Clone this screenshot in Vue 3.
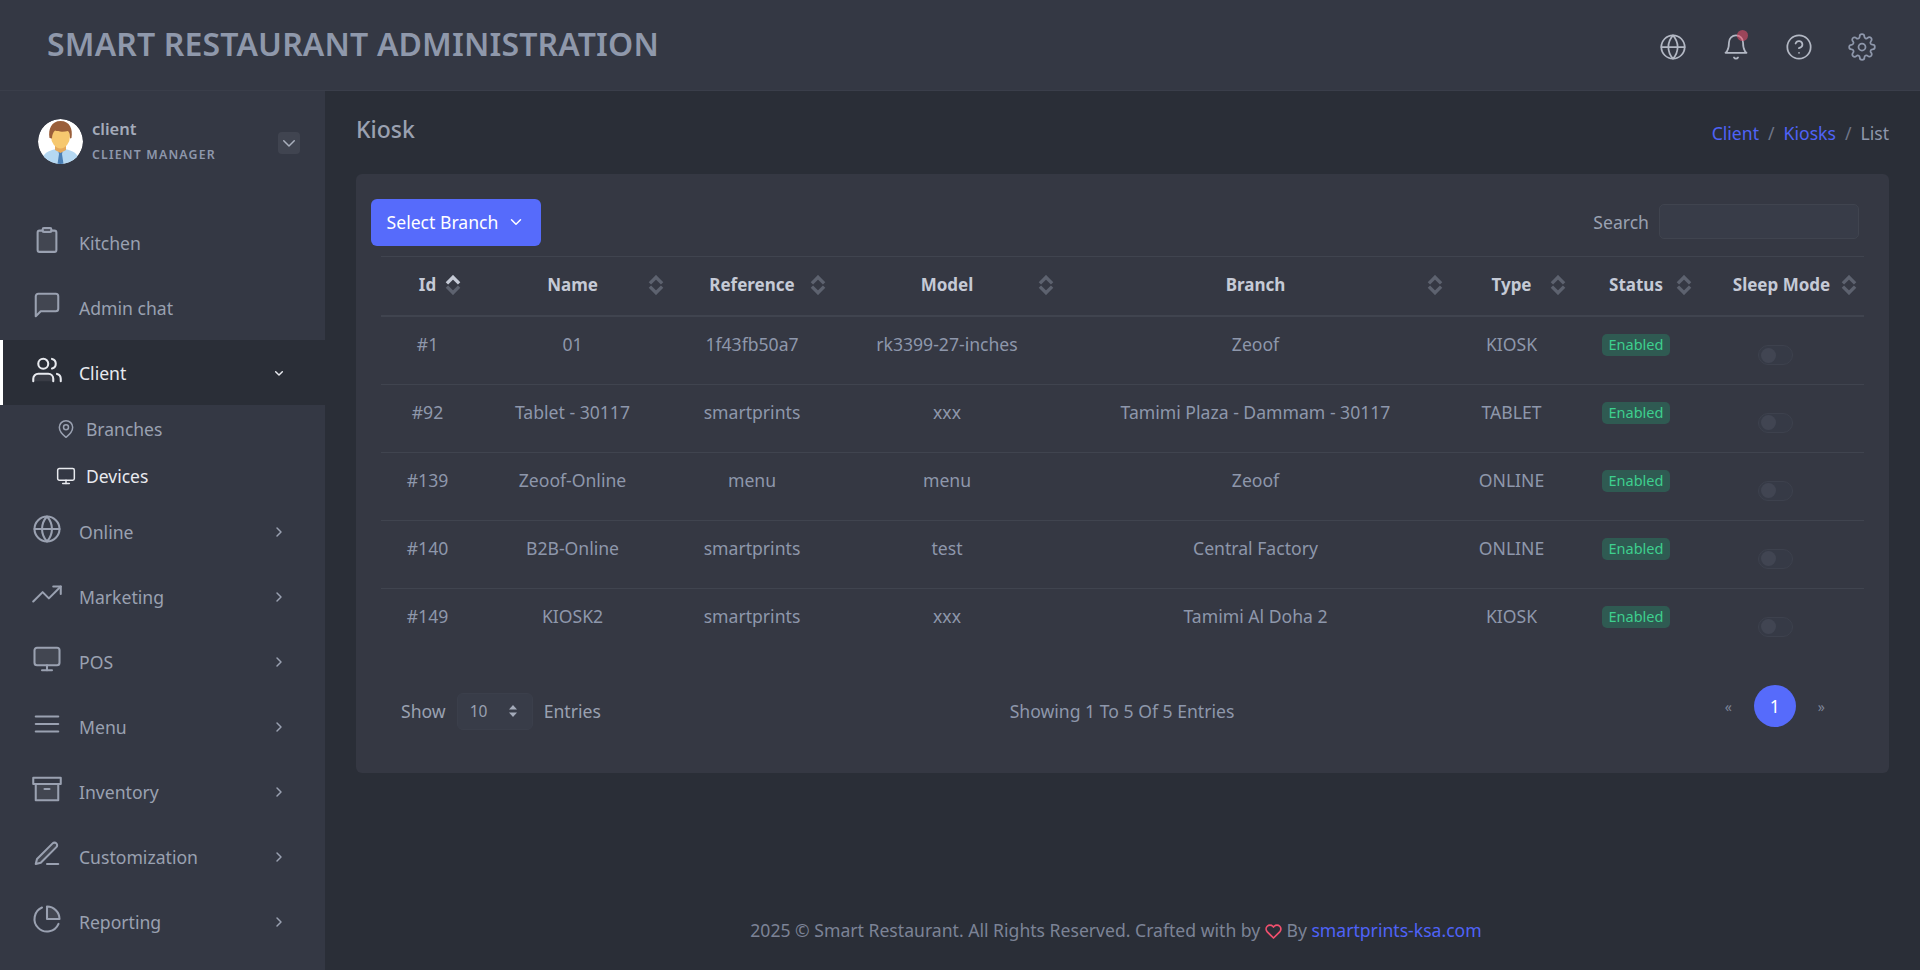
<template>
  <div class="page">
    <header class="topbar">
      <div class="brand">SMART RESTAURANT ADMINISTRATION</div>
      <div class="top-icons">
        <button class="top-icon">
          <svg viewBox="0 0 24 24" class="ico"><path v-for="d in icons.globe.s" :key="d" :d="d" /></svg>
        </button>
        <button class="top-icon">
          <svg viewBox="0 0 24 24" class="ico"><path v-for="d in icons.bell.s" :key="d" :d="d" /></svg>
          <span class="dot"></span>
        </button>
        <button class="top-icon">
          <svg viewBox="0 0 24 24" class="ico"><path v-for="d in icons.help.s" :key="d" :d="d" /></svg>
        </button>
        <button class="top-icon gear">
          <svg viewBox="0 0 24 24" class="ico"><path v-for="d in icons.gear.s" :key="d" :d="d" /></svg>
        </button>
      </div>
    </header>

    <div class="body-row">
      <aside class="sidebar">
        <div class="profile">
          <svg class="avatar" viewBox="0 0 45 45">
            <circle cx="22.5" cy="22.5" r="22.5" fill="#fff" />
            <path d="M5 38c2-5 8-7 13-8h9c5 1 11 3 13 8a22.500 22.500 0 0 1-35 0z" fill="#b5d8f2" />
            <path d="M20.500 33h4l-.5 2 1.500 10h-6L21 35z" fill="#4a7fb5" />
            <path d="M17 26h11v5l-5.500 3-5.500-3z" fill="#e5a95c" />
            <ellipse cx="22.500" cy="17" rx="9.500" ry="12.500" fill="#f6c86f" />
            <path d="M11.500 19c-1.500-9 2-17 11-17 9.500 0 12.500 8 11 17l-1.500.5c0-3.500-.5-6-2-7.500-4 1-9.500 1-13-.5-2 2-3 4.500-3 8z" fill="#9a5f3a" />
          </svg>
          <div class="who">
            <div class="who-name">client</div>
            <div class="who-role">CLIENT MANAGER</div>
          </div>
          <button class="who-toggle">
            <svg viewBox="0 0 24 24"><path d="M5 9l7 7 7-7" /></svg>
          </button>
        </div>

        <nav class="nav">
          <template v-for="item in nav" :key="item.label">
            <a class="nav-item" :class="{ active: item.active }">
              <svg viewBox="0 0 24 24" class="nav-ico">
                <path v-for="d in icons[item.icon].f" :key="d" :d="d" class="shade" />
                <path v-for="d in icons[item.icon].s" :key="d" :d="d" />
              </svg>
              <span class="nav-label">{{ item.label }}</span>
              <svg v-if="item.arrow" viewBox="0 0 24 24" class="nav-arrow">
                <path :d="item.active ? 'M7 10l5 5 5-5' : 'M9 6l6 6-6 6'" />
              </svg>
            </a>
            <a v-for="sub in item.children" :key="sub.label" class="sub-item" :class="{ current: sub.current }">
              <svg viewBox="0 0 24 24" class="sub-ico"><path v-for="d in icons[sub.icon].s" :key="d" :d="d" /></svg>
              <span>{{ sub.label }}</span>
            </a>
          </template>
        </nav>
      </aside>

      <main class="main">
        <div class="page-head">
          <h1 class="page-title">Kiosk</h1>
          <div class="crumbs">
            <a>Client</a><span class="sep">/</span><a>Kiosks</a><span class="sep">/</span><span>List</span>
          </div>
        </div>

        <section class="card">
          <div class="card-top">
            <button class="branch-btn">
              Select Branch
              <svg viewBox="0 0 24 24"><path d="M6 9l6 6 6-6" /></svg>
            </button>
            <label class="search">Search <input type="text" /></label>
          </div>

          <table class="grid">
            <colgroup>
              <col v-for="c in columns" :key="c.label" :style="{ width: c.width + 'px' }" />
            </colgroup>
            <thead>
              <tr>
                <th v-for="(c, i) in columns" :key="c.label">
                  {{ c.label }}
                  <svg class="sort" viewBox="0 0 14 18">
                    <path d="M1.500 7.500L7 2l5.500 5.500" :class="{ on: i === 0 }" />
                    <path d="M1.500 10.500L7 16l5.500-5.500" />
                  </svg>
                </th>
              </tr>
            </thead>
            <tbody>
              <tr v-for="row in rows" :key="row.id">
                <td>#{{ row.id }}</td>
                <td>{{ row.name }}</td>
                <td>{{ row.reference }}</td>
                <td>{{ row.model }}</td>
                <td>{{ row.branch }}</td>
                <td>{{ row.type }}</td>
                <td><span class="badge">Enabled</span></td>
                <td><span class="switch"><span class="knob"></span></span></td>
              </tr>
            </tbody>
          </table>

          <div class="card-foot">
            <div class="show">
              Show
              <span class="select">10
                <svg viewBox="0 0 10 14"><path d="M5 1l4 4.500H1z" /><path d="M5 13l4-4.500H1z" /></svg>
              </span>
              Entries
            </div>
            <div class="showing">Showing 1 To 5 Of 5 Entries</div>
            <div class="pager">
              <span class="pg-arrow">«</span>
              <span class="pg-num">1</span>
              <span class="pg-arrow">»</span>
            </div>
          </div>
        </section>

        <footer class="foot">
          2025 © Smart Restaurant. All Rights Reserved. Crafted with by
          <svg class="heart" viewBox="0 0 24 24"><path d="M20.8 4.600a5.500 5.500 0 0 0-7.800 0L12 5.700l-1-1.100a5.500 5.500 0 0 0-7.800 7.800L12 21.200l8.800-8.800a5.500 5.500 0 0 0 0-7.800z" /></svg>
          By <a>smartprints-ksa.com</a>
        </footer>
      </main>
    </div>
  </div>
</template>

<script setup>
const circle = (cx, cy, r) => `M${cx - r} ${cy}a${r} ${r} 0 1 0 ${r * 2} 0a${r} ${r} 0 1 0 ${-r * 2} 0z`

const icons = {
  clipboard: {
    f: ['M6 4.500h12a1.500 1.500 0 0 1 1.500 1.500v14a1.500 1.500 0 0 1-1.500 1.500H6A1.500 1.500 0 0 1 4.500 20V6A1.500 1.500 0 0 1 6 4.500z'],
    s: ['M8.500 4.500H6A1.500 1.500 0 0 0 4.500 6v14A1.500 1.500 0 0 0 6 21.500h12a1.500 1.500 0 0 0 1.500-1.500V6A1.500 1.500 0 0 0 18 4.500h-2.500', 'M9.500 2.500h5a1 1 0 0 1 1 1v1a1 1 0 0 1-1 1h-5a1 1 0 0 1-1-1v-1a1 1 0 0 1 1-1z']
  },
  chat: {
    f: ['M21 15a2 2 0 0 1-2 2H7l-4 4V5a2 2 0 0 1 2-2h14a2 2 0 0 1 2 2z'],
    s: ['M21 15a2 2 0 0 1-2 2H7l-4 4V5a2 2 0 0 1 2-2h14a2 2 0 0 1 2 2z']
  },
  users: {
    f: ['M17 21v-2a4 4 0 0 0-4-4H5a4 4 0 0 0-4 4v2z'],
    s: ['M17 21v-2a4 4 0 0 0-4-4H5a4 4 0 0 0-4 4v2', circle(9, 7, 4), 'M23 21v-2a4 4 0 0 0-3-3.870', 'M16 3.130a4 4 0 0 1 0 7.750']
  },
  globe: {
    f: [],
    s: [circle(12, 12, 10), 'M2 12h20', 'M12 2a15.300 15.300 0 0 1 4 10 15.300 15.300 0 0 1-4 10 15.300 15.300 0 0 1-4-10 15.300 15.300 0 0 1 4-10z']
  },
  trend: { f: [], s: ['M23 6l-9.500 9.500-5-5L1 18', 'M17 6h6v6'] },
  monitor: {
    f: ['M4 3h16a2 2 0 0 1 2 2v10a2 2 0 0 1-2 2H4a2 2 0 0 1-2-2V5a2 2 0 0 1 2-2z'],
    s: ['M4 3h16a2 2 0 0 1 2 2v10a2 2 0 0 1-2 2H4a2 2 0 0 1-2-2V5a2 2 0 0 1 2-2z', 'M8 21h8', 'M12 17v4']
  },
  menu: { f: [], s: ['M3 6h18', 'M3 12h18', 'M3 18h18'] },
  archive: {
    f: ['M3 8h18v13H3z'],
    s: ['M21 8v13H3V8', 'M1 3h22v5H1z', 'M10 12h4']
  },
  pen: {
    f: ['M16.500 3.500a2.121 2.121 0 0 1 3 3L7 19l-4 1 1-4z'],
    s: ['M12 20h9', 'M16.500 3.500a2.121 2.121 0 0 1 3 3L7 19l-4 1 1-4L16.500 3.500z']
  },
  pie: {
    f: ['M22 12A10 10 0 0 0 12 2v10z'],
    s: ['M21.210 15.890A10 10 0 1 1 8 2.830', 'M22 12A10 10 0 0 0 12 2v10z']
  },
  pin: { f: [], s: ['M20 10c0 6-8 12-8 12s-8-6-8-12a8 8 0 0 1 16 0z', circle(12, 10, 3)] },
  bell: { f: [], s: ['M18 8a6 6 0 0 0-12 0c0 7-3 9-3 9h18s-3-2-3-9', 'M13.730 21a2 2 0 0 1-3.460 0'] },
  help: { f: [], s: [circle(12, 12, 10), 'M9.090 9a3 3 0 0 1 5.830 1c0 2-3 3-3 3', 'M12 17h.010'] },
  gear: {
    f: [],
    s: [circle(12, 12, 3), 'M19.400 15a1.650 1.650 0 0 0 .330 1.820l.060.060a2 2 0 0 1 0 2.830 2 2 0 0 1-2.830 0l-.060-.060a1.650 1.650 0 0 0-1.820-.330 1.650 1.650 0 0 0-1 1.510V21a2 2 0 0 1-2 2 2 2 0 0 1-2-2v-.090A1.650 1.650 0 0 0 9 19.400a1.650 1.650 0 0 0-1.820.330l-.060.060a2 2 0 0 1-2.830 0 2 2 0 0 1 0-2.830l.060-.060a1.650 1.650 0 0 0 .330-1.820 1.650 1.650 0 0 0-1.510-1H3a2 2 0 0 1-2-2 2 2 0 0 1 2-2h.090A1.650 1.650 0 0 0 4.600 9a1.650 1.650 0 0 0-.330-1.820l-.060-.060a2 2 0 0 1 0-2.830 2 2 0 0 1 2.830 0l.060.060a1.650 1.650 0 0 0 1.820.330H9a1.650 1.650 0 0 0 1-1.510V3a2 2 0 0 1 2-2 2 2 0 0 1 2 2v.090a1.650 1.650 0 0 0 1 1.510 1.650 1.650 0 0 0 1.820-.330l.060-.060a2 2 0 0 1 2.830 0 2 2 0 0 1 0 2.830l-.060.060a1.650 1.650 0 0 0-.330 1.820V9a1.650 1.650 0 0 0 1.510 1H21a2 2 0 0 1 2 2 2 2 0 0 1-2 2h-.090a1.650 1.650 0 0 0-1.510 1z']
  }
}

const nav = [
  { label: 'Kitchen', icon: 'clipboard' },
  { label: 'Admin chat', icon: 'chat' },
  {
    label: 'Client',
    icon: 'users',
    arrow: true,
    active: true,
    children: [
      { label: 'Branches', icon: 'pin' },
      { label: 'Devices', icon: 'monitor', current: true }
    ]
  },
  { label: 'Online', icon: 'globe', arrow: true },
  { label: 'Marketing', icon: 'trend', arrow: true },
  { label: 'POS', icon: 'monitor', arrow: true },
  { label: 'Menu', icon: 'menu', arrow: true },
  { label: 'Inventory', icon: 'archive', arrow: true },
  { label: 'Customization', icon: 'pen', arrow: true },
  { label: 'Reporting', icon: 'pie', arrow: true }
]

const columns = [
  { label: 'Id', width: 93 },
  { label: 'Name', width: 197 },
  { label: 'Reference', width: 162 },
  { label: 'Model', width: 228 },
  { label: 'Branch', width: 389 },
  { label: 'Type', width: 123 },
  { label: 'Status', width: 126 },
  { label: 'Sleep Mode', width: 165 }
]

const rows = [
  { id: 1, name: '01', reference: '1f43fb50a7', model: 'rk3399-27-inches', branch: 'Zeoof', type: 'KIOSK' },
  { id: 92, name: 'Tablet - 30117', reference: 'smartprints', model: 'xxx', branch: 'Tamimi Plaza - Dammam - 30117', type: 'TABLET' },
  { id: 139, name: 'Zeoof-Online', reference: 'menu', model: 'menu', branch: 'Zeoof', type: 'ONLINE' },
  { id: 140, name: 'B2B-Online', reference: 'smartprints', model: 'test', branch: 'Central Factory', type: 'ONLINE' },
  { id: 149, name: 'KIOSK2', reference: 'smartprints', model: 'xxx', branch: 'Tamimi Al Doha 2', type: 'KIOSK' }
]
</script>

<style>
html,
body {
  margin: 0;
  background: #2a2e37;
}
</style>

<style scoped>
.page {
  height: 970px;
  display: flex;
  flex-direction: column;
  overflow: hidden;
  background: #2a2e37;
  font-family: "Noto Sans", "Open Sans", sans-serif;
  font-size: 16px;
  color: #8e97ab;
}

svg {
  fill: none;
  stroke: currentColor;
  stroke-linecap: round;
  stroke-linejoin: round;
}

button {
  border: 0;
  background: none;
  padding: 0;
  font: inherit;
  color: inherit;
}

/* top bar */
.topbar {
  height: 91px;
  box-sizing: border-box;
  flex: none;
  display: flex;
  align-items: center;
  justify-content: space-between;
  padding: 0 44px 3px 47px;
  background: #343844;
  border-bottom: 1px solid #3a3e4a;
}

.brand {
  font-size: 32px;
  font-weight: 600;
  letter-spacing: 0.15px;
  color: #8f98ab;
}

.top-icons {
  display: flex;
  align-items: center;
  gap: 35px;
  margin-top: 7px;
}

.top-icon {
  position: relative;
  width: 28px;
  height: 28px;
  display: block;
  color: #b3b8c4;
}

.top-icon.gear {
  color: #8e97ab;
}

.ico {
  width: 28px;
  height: 28px;
  display: block;
  stroke-width: 1.5;
}

.dot {
  position: absolute;
  top: -3px;
  right: 2px;
  width: 11px;
  height: 11px;
  border-radius: 50%;
  background: rgba(240, 80, 110, 0.55);
}

.body-row {
  flex: 1;
  display: flex;
  min-height: 0;
}

/* sidebar */
.sidebar {
  width: 325px;
  flex: none;
  background: #343844;
}

.profile {
  height: 119px;
  box-sizing: border-box;
  display: flex;
  align-items: center;
  padding: 0 25px 18px 38px;
}

.avatar {
  width: 45px;
  height: 45px;
  flex: none;
  stroke: none;
  border-radius: 50%;
}

.who {
  flex: 1;
  margin: -3px 0 0 9px;
}

.who-name {
  font-size: 16.5px;
  font-weight: 600;
  line-height: 22px;
  color: #a4abba;
}

.who-role {
  margin-top: 7px;
  font-size: 12.3px;
  font-weight: 600;
  line-height: 16px;
  letter-spacing: 1.200px;
  color: #8e97ab;
}

.who-toggle {
  width: 22px;
  height: 22px;
  margin-top: 2px;
  border-radius: 4px;
  background: #404450;
  color: #aab0bd;
}

.who-toggle svg {
  width: 18px;
  height: 18px;
  display: block;
  margin: 2px;
  stroke-width: 2;
}

.nav-item {
  height: 65px;
  box-sizing: border-box;
  display: flex;
  align-items: center;
  padding: 0 38px 0 32px;
  color: #9aa1b1;
}

.nav-item.active {
  padding-left: 29px;
  border-left: 3px solid #fff;
  background: #2a2e37;
  color: #e8eaef;
}

.nav-ico {
  width: 30px;
  height: 30px;
  flex: none;
  margin-top: -5px;
  stroke-width: 1.650;
}

.shade {
  fill: rgba(255, 255, 255, 0.07);
  stroke: none;
}

.nav-label {
  flex: 1;
  margin-left: 17px;
  font-size: 17.600px;
}

.nav-arrow {
  width: 16px;
  height: 16px;
  stroke-width: 2.200;
}

.sub-item {
  height: 47px;
  display: flex;
  align-items: center;
  padding-left: 56px;
  font-size: 17.500px;
  color: #9aa1b1;
}

.sub-item.current {
  color: #e8eaef;
}

.sub-ico {
  width: 20px;
  height: 20px;
  margin-right: 10px;
  stroke-width: 1.800;
}

/* main */
.main {
  flex: 1;
  min-width: 0;
  display: flex;
  flex-direction: column;
  padding: 0 31px;
}

.page-head {
  height: 83px;
  flex: none;
  display: flex;
  align-items: center;
  justify-content: space-between;
}

.page-title {
  margin: 0 0 8px;
  font-size: 23px;
  font-weight: 500;
  color: #9aa1b1;
}

.crumbs {
  display: flex;
  gap: 9px;
  font-size: 17.600px;
  color: #8e97ab;
}

.crumbs a {
  color: #4f63f7;
}

.sep {
  color: #6f7688;
}

.card {
  background: #353843;
  border-radius: 6px;
  padding: 25px 25px 0;
  height: 599px;
  box-sizing: border-box;
}

.card-top {
  display: flex;
  align-items: center;
  justify-content: space-between;
  margin-left: -10px;
  padding-right: 5px;
  height: 47px;
}

.branch-btn {
  width: 170px;
  height: 47px;
  display: flex;
  align-items: center;
  justify-content: center;
  gap: 9px;
  padding-bottom: 1px;
  border-radius: 6px;
  background: #566bfb;
  color: #fff;
  font-size: 17.600px;
}

.branch-btn svg {
  width: 18px;
  height: 18px;
  stroke-width: 2;
}

.search {
  display: flex;
  align-items: center;
  gap: 10px;
  margin-top: -2px;
  font-size: 17.600px;
  color: #9aa1b1;
}

.search input {
  width: 200px;
  height: 35px;
  box-sizing: border-box;
  border: 1px solid #40444f;
  border-radius: 5px;
  background: #383c48;
}

.grid {
  width: 1483px;
  margin-top: 10px;
  table-layout: fixed;
  border-collapse: collapse;
  border-top: 1px solid #40444f;
}

.grid th {
  position: relative;
  height: 55px;
  padding: 0 0 3px;
  font-size: 17px;
  font-weight: 700;
  color: #c5cad6;
  border-bottom: 2px solid #40444f;
}

.sort {
  position: absolute;
  right: 7px;
  top: 18px;
  width: 16px;
  height: 20px;
  color: #5d626f;
  stroke-width: 3;
  stroke-linecap: butt;
  stroke-linejoin: miter;
}

.grid th:first-child .sort {
  right: 13px;
}

.sort .on {
  color: #c5cad6;
}

.grid td {
  height: 68px;
  box-sizing: border-box;
  padding: 14px 0 0;
  vertical-align: top;
  text-align: center;
  font-size: 17.600px;
  line-height: 26px;
  border-bottom: 1px solid #40444f;
}

.grid tbody tr:last-child td {
  border-bottom: 0;
}

.badge {
  display: inline-block;
  width: 68px;
  height: 22px;
  margin-top: 3px;
  border-radius: 5px;
  background: #2f5a52;
  color: #3ecf8e;
  font-size: 14.500px;
  line-height: 21px;
  vertical-align: top;
}

.switch {
  display: inline-flex;
  align-items: center;
  width: 35px;
  height: 20px;
  margin: 14px 0 0 -12px;
  box-sizing: border-box;
  padding-left: 2px;
  border: 1px solid #3d414d;
  border-radius: 10px;
  background: #363a46;
  vertical-align: top;
}

.knob {
  width: 15px;
  height: 15px;
  border-radius: 50%;
  background: #414552;
}

.card-foot {
  display: grid;
  grid-template-columns: 1fr auto 1fr;
  align-items: center;
  margin-top: 32px;
  padding: 0 39px 0 20px;
  height: 46px;
  font-size: 17.600px;
}

.show {
  display: flex;
  align-items: center;
  gap: 11px;
  color: #9aa1b1;
}

.showing {
  margin-left: 18px;
}

.select {
  width: 76px;
  height: 37px;
  box-sizing: border-box;
  display: flex;
  align-items: center;
  justify-content: space-between;
  padding: 0 14px 0 12px;
  border: 1px solid #3b3f4b;
  border-radius: 6px;
  background: #383c48;
  font-size: 15.500px;
}

.select svg {
  width: 10px;
  height: 14px;
  fill: #a4abba;
  stroke: none;
}

.pager {
  justify-self: end;
  display: flex;
  align-items: center;
  gap: 22px;
  margin-top: -10px;
}

.pg-arrow {
  font-size: 14px;
  color: #7c8396;
}

.pg-num {
  width: 42px;
  height: 42px;
  display: flex;
  align-items: center;
  justify-content: center;
  border-radius: 50%;
  background: #566bfb;
  color: #fff;
}

/* footer */
.foot {
  margin-top: auto;
  height: 79px;
  flex: none;
  box-sizing: border-box;
  padding-right: 13px;
  text-align: center;
  font-size: 17.600px;
  line-height: 79px;
  color: #7c8396;
}

.foot a {
  color: #4f63f7;
}

.heart {
  width: 17px;
  height: 17px;
  vertical-align: -3px;
  color: #f0506e;
  stroke-width: 2.400;
}
</style>
